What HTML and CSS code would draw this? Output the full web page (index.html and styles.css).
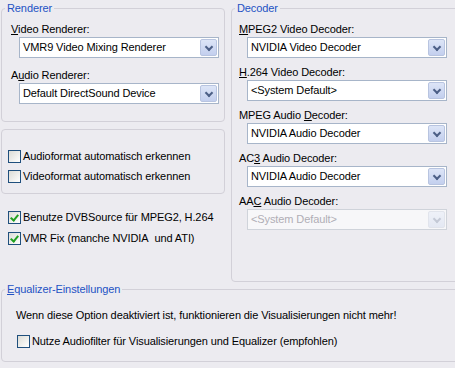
FILE: index.html
```html
<!DOCTYPE html>
<html>
	<head>
		<meta charset="UTF-8">
		<title>Optionen</title>
		<link rel="stylesheet" href="styles.css">
	</head>
	<body>
		<div class="dialog">
			<div class="top">
				<div class="left">
					<fieldset class="group renderer">
						<legend>Renderer</legend>
						<div class="inner">
							<label class="cap"><u>V</u>ideo Renderer:</label>
							<div class="combo"><span class="value">VMR9 Video Mixing Renderer</span><span class="drop"></span></div>
							<label class="cap">A<u>u</u>dio Renderer:</label>
							<div class="combo"><span class="value">Default DirectSound Device</span><span class="drop"></span></div>
						</div>
					</fieldset>
					<div class="panel">
						<div class="check"><span class="box"></span>Audioformat automatisch erkennen</div>
						<div class="check"><span class="box"></span>Videoformat automatisch erkennen</div>
					</div>
					<div class="checks">
						<div class="check"><span class="box on"></span>Benutze DVBSource für MPEG2, H.264</div>
						<div class="check"><span class="box on"></span>VMR Fix (manche NVIDIA&nbsp; und ATI)</div>
					</div>
				</div>
				<fieldset class="group decoder">
					<legend>Decoder</legend>
					<div class="inner">
						<label class="cap"><u>M</u>PEG2 Video Decoder:</label>
						<div class="combo"><span class="value">NVIDIA Video Decoder</span><span class="drop"></span></div>
						<label class="cap"><u>H</u>.264 Video Decoder:</label>
						<div class="combo"><span class="value">&lt;System Default&gt;</span><span class="drop"></span></div>
						<label class="cap">MPEG Audio <u>D</u>ecoder:</label>
						<div class="combo"><span class="value">NVIDIA Audio Decoder</span><span class="drop"></span></div>
						<label class="cap">AC<u>3</u> Audio Decoder:</label>
						<div class="combo"><span class="value">NVIDIA Audio Decoder</span><span class="drop"></span></div>
						<label class="cap">AA<u>C</u> Audio Decoder:</label>
						<div class="combo off"><span class="value">&lt;System Default&gt;</span><span class="drop"></span></div>
					</div>
				</fieldset>
			</div>
			<fieldset class="group eq">
				<legend><u>E</u>qualizer-Einstellungen</legend>
				<div class="inner">
					<p class="note">Wenn diese Option deaktiviert ist, funktionieren die Visualisierungen nicht mehr!</p>
					<div class="check"><span class="box"></span>Nutze Audiofilter für Visualisierungen und Equalizer (empfohlen)</div>
				</div>
			</fieldset>
		</div>
	</body>
</html>
```

FILE: styles.css
```css
*{
	margin: 0;
	padding: 0;
	box-sizing: border-box;
}
html, body{
	width: 455px;
	height: 368px;
	overflow: hidden;
}
body{
	background-color: #ecebf0;
	font-family: "Liberation Sans", Arial, sans-serif;
	font-size: 11px;
	line-height: 13px;
	letter-spacing: -0.1px;
	color: #000;
}
u{
	text-decoration: underline;
	text-underline-offset: 1px;
}

.dialog{
	padding-left: 1px;
	width: 480px;
}
.top{
	display: flex;
	gap: 6px;
	align-items: flex-start;
}
.left{
	width: 224px;
	flex: none;
}

/* group boxes */
.group{
	border: 1px solid #d2d0d8;
	border-radius: 4px;
	margin-top: 2px;
}
.group>legend{
	margin-left: 3px;
	padding: 0 2px;
	color: #2352c4;
	line-height: 13px;
}
.renderer{
	height: 120px;
}
.renderer .inner{
	padding: 8px 0 0 9px;
}
.renderer .combo{
	margin-bottom: 11px;
}
.decoder{
	width: 240px;
	height: 280px;
	flex: none;
}
.decoder .inner{
	padding: 8px 0 0 7px;
}
.eq{
	width: 470px;
	height: 79px;
	margin-top: 1px;
}
.eq .inner{
	padding: 13px 0 0 14px;
}

/* labels + combo boxes */
.cap{
	display: block;
	margin-bottom: 1px;
}
.combo{
	display: flex;
	align-items: center;
	width: 200px;
	height: 21px;
	margin: 0 0 8px 8px;
	padding: 1px;
	border: 1px solid #a7b5c9;
	background-color: #fff;
}
.combo .value{
	flex: 1;
	padding-left: 2px;
	white-space: nowrap;
}
.combo .drop{
	position: relative;
	width: 17px;
	height: 17px;
	border: 1px solid #b8c4e0;
	border-radius: 2px;
	background: linear-gradient(#dde5f7, #c3cfee);
}
.combo .drop::after{
	content: "";
	position: absolute;
	left: 5px;
	top: 4px;
	width: 4px;
	height: 4px;
	border-right: 2px solid #4c5f86;
	border-bottom: 2px solid #4c5f86;
	transform: rotate(45deg);
}
.combo.off{
	border-color: #cfd3da;
	background-color: #f7f7f9;
	color: #b0aeb6;
}
.combo.off .drop{
	border-color: #e1e4ec;
	background: linear-gradient(#eef1f8, #e4e8f3);
}
.combo.off .drop::after{
	border-color: #c4c9d6;
}

/* check boxes */
.panel{
	height: 65px;
	margin-top: 7px;
	padding: 16px 0 0 6px;
	border: 1px solid #d2d0d8;
	border-radius: 4px;
}
.checks{
	margin-top: 13px;
	padding-left: 7px;
}
.checks .check{
	margin-bottom: 1px;
}
.check{
	display: flex;
	align-items: center;
	height: 20px;
	white-space: nowrap;
}
.box{
	position: relative;
	width: 13px;
	height: 13px;
	margin-right: 2px;
	flex: none;
	border: 1px solid #1f4f7d;
	background: linear-gradient(135deg, #dcdcd6, #fff);
}
.box.on::after{
	content: "";
	position: absolute;
	left: 3px;
	top: 1px;
	width: 3px;
	height: 6px;
	border-right: 2px solid #21a121;
	border-bottom: 2px solid #21a121;
	transform: rotate(40deg);
}
.note{
	margin-bottom: 9px;
}
.eq .check{
	padding-left: 1px;
}
```
